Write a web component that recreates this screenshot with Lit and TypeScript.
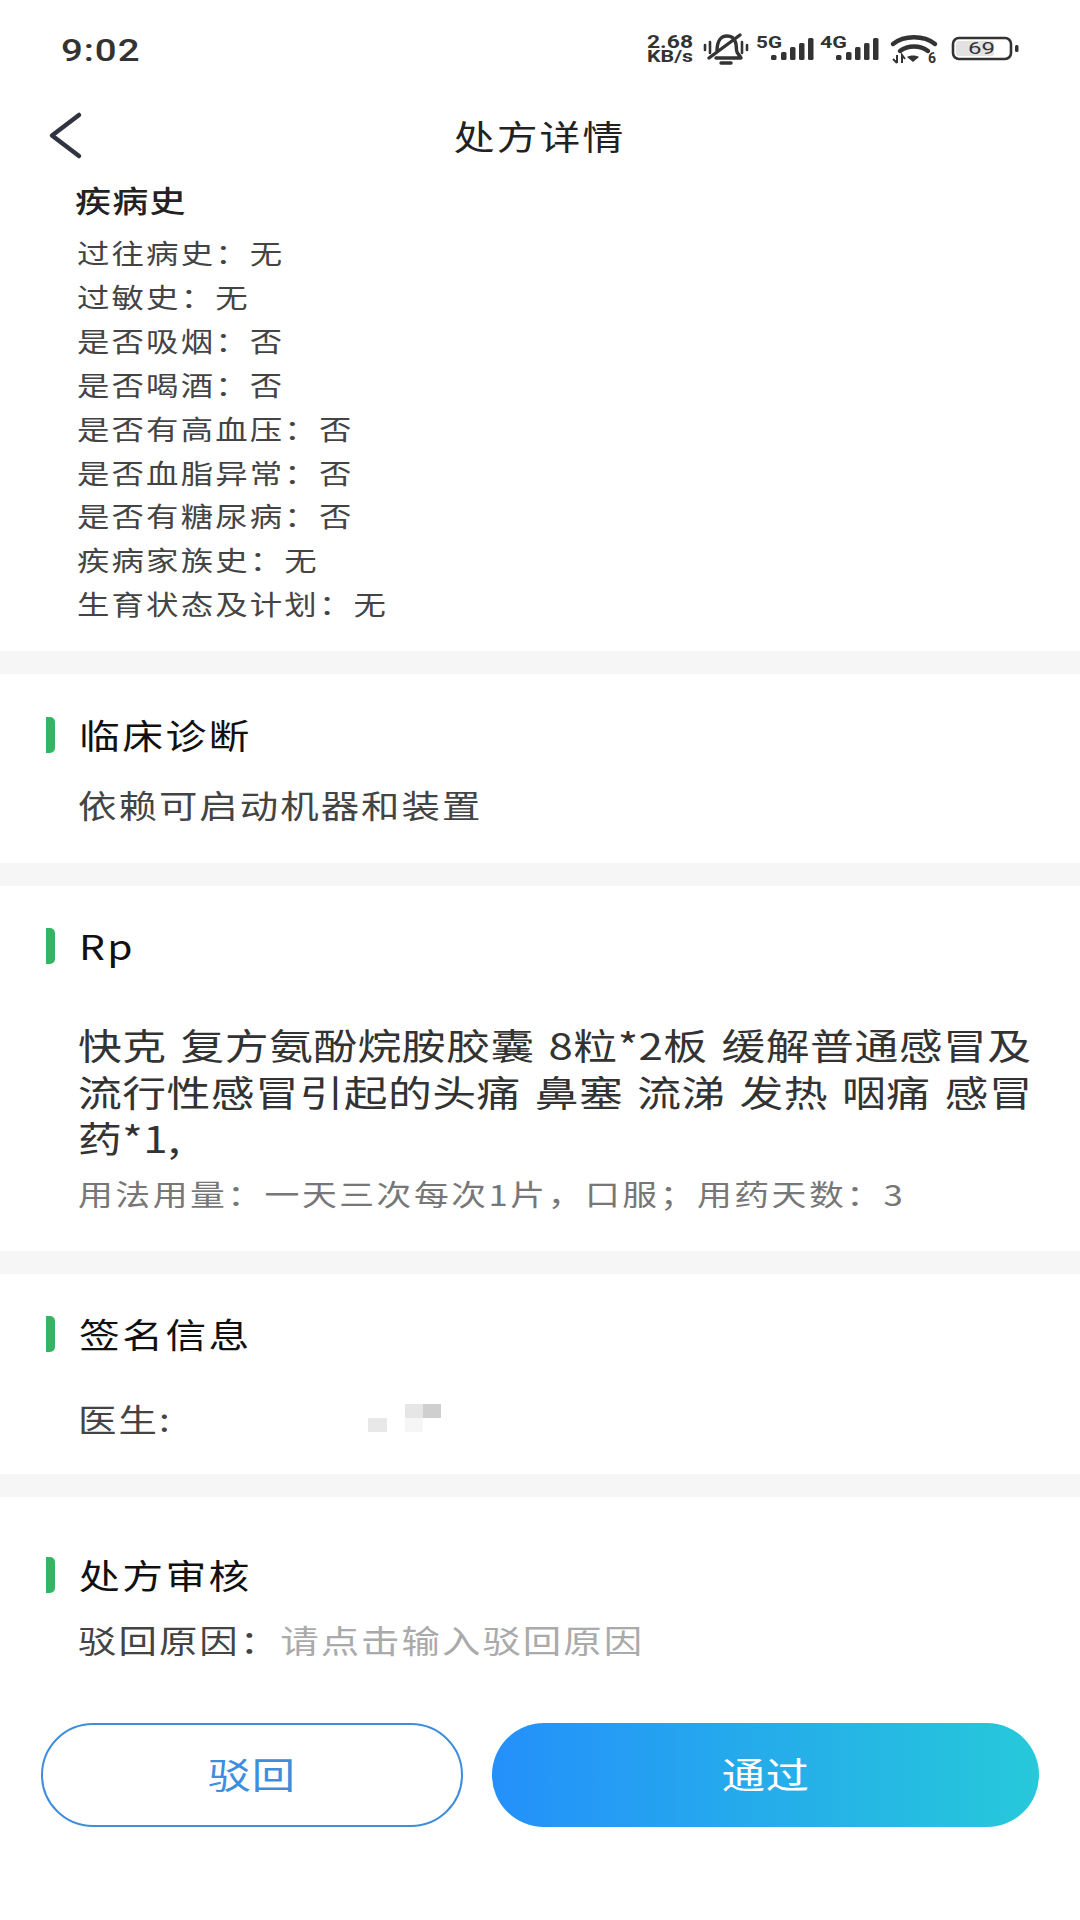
import { LitElement, html, css, svg } from "lit";
import { customElement } from "lit/decorators.js";

function bars(x: number) {
  const xs = [0, 10, 19, 28, 37];
  const hs = [5, 8, 13, 17, 22];
  return xs.map((d, i) => svg`<rect x=${x + d} y=${30 - hs[i]} width="5.5" height=${hs[i]} rx="1.5"></rect>`);
}

@customElement("app-root")
export class AppRoot extends LitElement {
  static styles = css`
    :host { display: block; width: 1080px; height: 1920px; background: #fff; overflow: hidden;
      font-family: "Noto Sans CJK SC", "Liberation Sans", sans-serif; color: #333; }
    .w { transform: scaleX(1.2); transform-origin: 0 50%; }
    .status { height: 100px; display: flex; align-items: center; justify-content: space-between; padding: 0 60px 0 61px; box-sizing: border-box; }
    .time { font: 500 32px "Roboto", sans-serif; letter-spacing: 0.8px; color: #333; }
    .sicons { display: block; width: 376px; height: 40px; }
    .nav { height: 72px; display: flex; align-items: center; justify-content: center; position: relative; }
    .nav h1 { margin: 0; font-size: 34px; font-weight: 400; letter-spacing: 1.8px; color: #222; line-height: 72px; transform-origin: 50% 50%; }
    .back { position: absolute; left: 46px; top: 8px; width: 40px; height: 56px; }
    .history { padding: 5px 0 0 75px; height: 479px; box-sizing: border-box; }
    .history h2 { margin: 0 0 10px; font-size: 30px; font-weight: 500; letter-spacing: 1px; color: #222; line-height: 44px; }
    .row { font-size: 27px; line-height: 43.9px; letter-spacing: 1.8px; color: #444; white-space: nowrap; margin-left: 2px; }
    .gap { height: 23px; background: #f6f6f6; }
    .sec { padding: 0 41px 0 46px; box-sizing: border-box; position: relative; }
    .head { display: flex; align-items: center; gap: 24px; height: 36px; }
    .bar { width: 9px; height: 36px; background: #34b563; border-radius: 0 5px 5px 0; }
    .head span { display: block; font-size: 34px; font-weight: 400; color: #111; letter-spacing: 2px; line-height: 36px; }
    .body { font-size: 32px; color: #444; letter-spacing: 1.7px; margin-left: 32px; white-space: nowrap; line-height: 44px; }
    .diag { height: 189px; padding-top: 43px; }
    .diag .body { margin-top: 29px; }
    .rp { height: 365px; padding-top: 42px; }
    .rp .txt { margin: 58px 0 0 32px; font-size: 36.5px; line-height: 46.6px; letter-spacing: 0.4px; word-spacing: 3px; color: #333; width: 815px; }
    .rp .use { margin: 9px 0 0 32px; font-size: 29px; line-height: 44px; letter-spacing: 2.1px; color: #777; white-space: nowrap; }
    .sign { height: 200px; padding-top: 42px; }
    .sign .body { margin-top: 44px; }
    .blur { position: absolute; left: 368px; top: 130px; width: 73px; height: 28px; }
    .audit { padding-top: 60px; }
    .audit .body { margin-top: 24px; }
    .hint { color: #aaa; }
    .btns { display: flex; gap: 29px; margin: 0 41px; padding-top: 62px; }
    .btn { height: 104px; border-radius: 52px; display: flex; align-items: center; justify-content: center; box-sizing: border-box; }
    .btn span { display: block; font-size: 36px; line-height: 44px; letter-spacing: 0.8px; transform-origin: 50% 50%; margin-top: -4px; }
    .no { width: 422px; border: 2px solid #3f8ede; color: #3f8ede; background: #fff; }
    .ok { width: 547px; color: #fff; background: linear-gradient(90deg, #2490fb, #26c9da); }
  `;

  render() {
    const rows = ["过往病史：无","过敏史：无","是否吸烟：否","是否喝酒：否","是否有高血压：否","是否血脂异常：否","是否有糖尿病：否","疾病家族史：无","生育状态及计划：无"];
    return html`
      <div class="status">
        <div class="time w">9:02</div>
        <svg class="sicons" viewBox="0 0 376 40" fill="#333">
          <text x="3" y="18" font-family="Roboto" font-weight="700" font-size="18" textLength="46" lengthAdjust="spacingAndGlyphs">2.68</text>
          <text x="3" y="32" font-family="Roboto" font-weight="700" font-size="17" textLength="46" lengthAdjust="spacingAndGlyphs">KB/s</text>
          <g fill="none" stroke="#333" stroke-width="3.4" stroke-linecap="round" stroke-linejoin="round">
            <path d="M73 21C73 11 77 6 83 6c2 0 4 .5 5.500 1.500"/>
            <path d="M91 11c1 2 1.500 5 1.500 9 0 4 3.500 5 4.500 8H72"/>
            <path d="M65 28L96 5"/><path d="M77 33h10"/>
            <path d="M66 12v11M98 12v11" stroke-width="2.6"/>
            <path d="M61 15v5M103 15v5" stroke-width="2.6"/>
          </g>
          <text x="112" y="18" font-family="Roboto" font-weight="700" font-size="16" textLength="26" lengthAdjust="spacingAndGlyphs">5G</text>
          ${bars(127)}
          <text x="176" y="18" font-family="Roboto" font-weight="700" font-size="16" textLength="27" lengthAdjust="spacingAndGlyphs">4G</text>
          ${bars(192)}
          <g fill="none" stroke="#333" stroke-width="4.4" stroke-linecap="round">
            <path d="M249 14c11-9 31-9 42 0"/><path d="M256 21c8-6 20-6 28 0"/>
          </g>
          <path d="M263 27c3-2 9-2 12 0l-6 5z"/>
          <path d="M253 25v8M249 29l4 4M258 33v-8l3 4" fill="none" stroke="#333" stroke-width="2"/>
          <text x="284" y="33" font-family="Roboto" font-weight="700" font-size="14">6</text>
          <rect x="309" y="8" width="58" height="21" rx="6" fill="none" stroke="#333" stroke-width="2.6"/>
          <rect x="312" y="11" width="38" height="15" rx="2.500" fill="#e2e2e2"/>
          <text x="324" y="24" font-family="Roboto" font-size="16" textLength="27" lengthAdjust="spacingAndGlyphs">69</text>
          <rect x="371" y="15" width="3.500" height="7" rx="1.500"/>
        </svg>
      </div>
      <div class="nav">
        <svg class="back" viewBox="0 0 40 56" fill="none" stroke="#2f3440" stroke-width="4.5" stroke-linecap="round" stroke-linejoin="round"><path d="M33 7 L6 27.500 L33 48"/></svg>
        <h1 class="w">处方详情</h1>
      </div>
      <div class="history">
        <h2 class="w">疾病史</h2>
        ${rows.map((r) => html`<div class="row w">${r}</div>`)}
      </div>
      <div class="gap"></div>
      <div class="sec diag">
        <div class="head"><i class="bar"></i><span class="w">临床诊断</span></div>
        <div class="body w">依赖可启动机器和装置</div>
      </div>
      <div class="gap"></div>
      <div class="sec rp">
        <div class="head"><i class="bar"></i><span class="w">Rp</span></div>
        <div class="txt w">快克 复方氨酚烷胺胶囊 8粒*2板 缓解普通感冒及流行性感冒引起的头痛 鼻塞 流涕 发热 咽痛 感冒药*1,</div>
        <div class="use w">用法用量：一天三次每次1片，口服；用药天数：3</div>
      </div>
      <div class="gap"></div>
      <div class="sec sign">
        <div class="head"><i class="bar"></i><span class="w">签名信息</span></div>
        <div class="body w">医生:</div>
        <svg class="blur" viewBox="0 0 73 28"><rect x="0" y="14" width="19" height="14" fill="#e8e8e8"/><rect x="37" y="0" width="18" height="14" fill="#e6e6e6"/><rect x="55" y="0" width="18" height="14" fill="#cfcfcf"/><rect x="37" y="14" width="18" height="14" fill="#f6f6f6"/></svg>
      </div>
      <div class="gap"></div>
      <div class="sec audit">
        <div class="head"><i class="bar"></i><span class="w">处方审核</span></div>
        <div class="body w">驳回原因：<span class="hint">请点击输入驳回原因</span></div>
      </div>
      <div class="btns">
        <div class="btn no"><span class="w">驳回</span></div>
        <div class="btn ok"><span class="w">通过</span></div>
      </div>
    `;
  }
}
